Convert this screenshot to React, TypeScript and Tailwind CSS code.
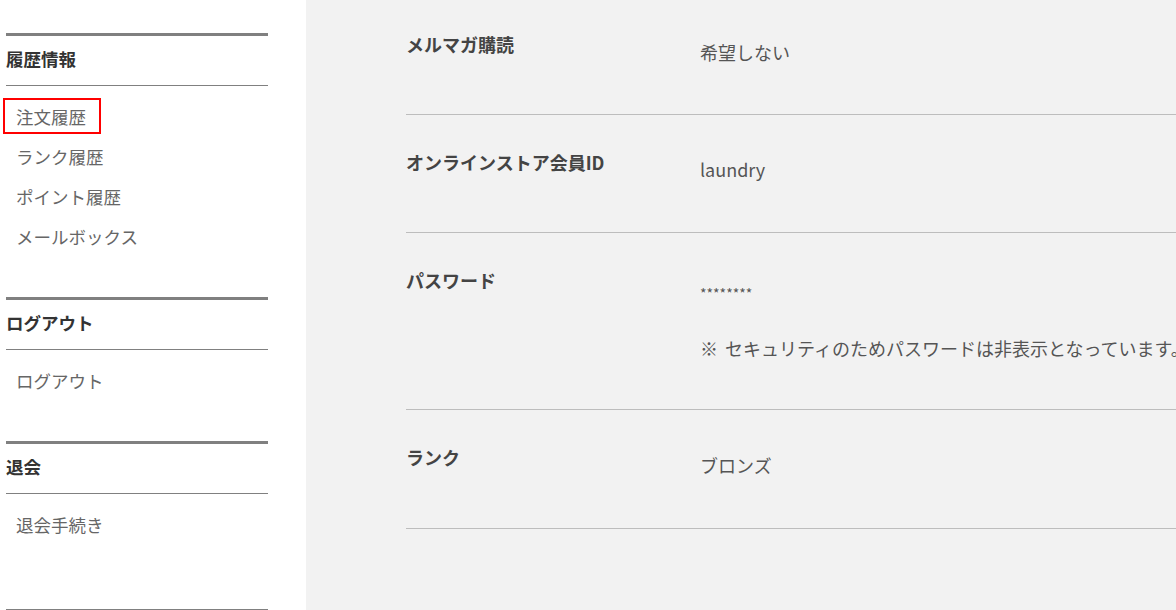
import React from "react";

const font = { fontFamily: '"Noto Sans CJK JP", "Noto Sans", sans-serif' };

function Section({
  title,
  items,
  active,
  mb,
}: {
  title: string;
  items: string[];
  active?: number;
  mb: string;
}) {
  return (
    <div className={mb}>
      <div className="h-[3px] bg-[#808080]" />
      <div className="h-[50px] border-b border-[#808080] pt-[11px] text-[17.5px] font-bold leading-[24px] text-[#333]">
        {title}
      </div>
      <ul className="pt-[12px]">
        {items.map((it, i) => (
          <li key={it} className="h-[40px]">
            <span
              className={
                "ml-[-3px] inline-block h-[36px] border-2 pl-[11px] pr-[13px] pt-[2px] text-[17.5px] leading-[30px] text-[#666] " +
                (i === active ? "border-[#ff0000]" : "border-transparent")
              }
            >
              {it}
            </span>
          </li>
        ))}
      </ul>
    </div>
  );
}

function Row({
  label,
  children,
  h,
}: {
  label: string;
  children: React.ReactNode;
  h: string;
}) {
  return (
    <div className={"flex border-b border-[#bdbdbd] " + h}>
      <div className="w-[294px] shrink-0 pt-[35px] text-[18px] font-bold leading-[24px] text-[#444]">
        {label}
      </div>
      <div className="flex-1 whitespace-nowrap text-[18px] leading-[24px] text-[#555]">
        {children}
      </div>
    </div>
  );
}

export default function App() {
  return (
    <div className="flex h-[610px] w-[1176px] overflow-hidden bg-white" style={font}>
      <aside className="w-[306px] shrink-0 pl-[6px] pr-[38px] pt-[33px]">
        <Section
          title="履歴情報"
          items={["注文履歴", "ランク履歴", "ポイント履歴", "メールボックス"]}
          active={0}
          mb="mb-[39px]"
        />
        <Section title="ログアウト" items={["ログアウト"]} mb="mb-[39px]" />
        <Section title="退会" items={["退会手続き"]} mb="mb-[63px]" />
        <div className="h-[3px] bg-[#808080]" />
      </aside>
      <main className="flex-1 overflow-hidden bg-[#f2f2f2] pl-[100px]">
        <div className="-mt-[3px] w-[900px]">
          <Row label="メルマガ購読" h="h-[118px]">
            <div className="pt-[43px]">希望しない</div>
          </Row>
          <Row label="オンラインストア会員ID" h="h-[118px]">
            <div className="pt-[42px]">laundry</div>
          </Row>
          <Row label="パスワード" h="h-[177px]">
            <div className="pt-[48px] text-[14px] leading-[24px]">********</div>
            <div className="mt-[31px]">
              ※<span className="ml-[7px]">セキュリティのためパスワードは非表示となっています。</span>
            </div>
          </Row>
          <Row label="ランク" h="h-[119px]">
            <div className="pt-[43px]">ブロンズ</div>
          </Row>
        </div>
      </main>
    </div>
  );
}
